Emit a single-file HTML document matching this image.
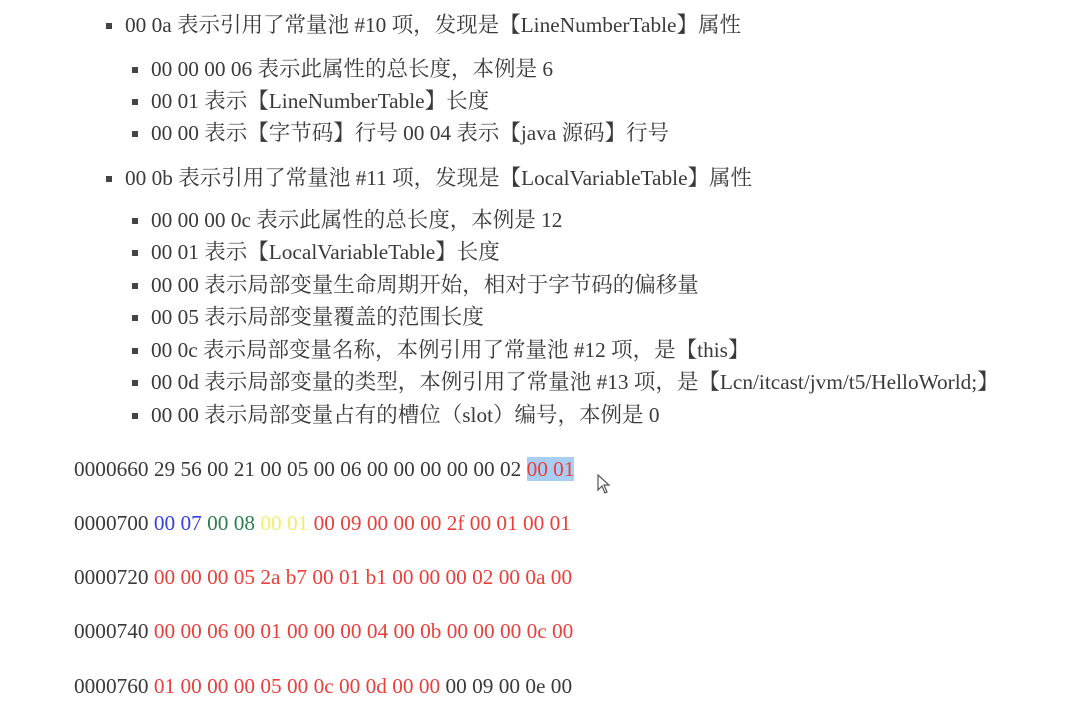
<!DOCTYPE html>
<html><head><meta charset="utf-8"><style>
body{margin:0;width:1083px;height:710px;background:#fff;overflow:hidden;font-family:"Liberation Serif","Noto Serif CJK SC","Noto Sans CJK SC",serif;font-size:21.3px;color:#3a3a3a;}
.l{position:absolute;white-space:nowrap;line-height:24px;}
.c{font-size:21.5px}
.b1::before,.b2::before{content:"";position:absolute;width:6px;height:6px;background:#444;top:10px;left:-19px}
.r{color:#e8403a}.bl{color:#3442e0}.g{color:#2e7d4f}.y{color:#f2ee6a}
.sel{background:#a9cdf3}
</style></head><body>
<div class="l b1" style="left:125px;top:13px">00 0a <span class="c">表示引用了常量池</span> #10 <span class="c">项，发现是【</span>LineNumberTable<span class="c">】属性</span></div>
<div class="l b2" style="left:151px;top:57px">00 00 00 06 <span class="c">表示此属性的总长度，本例是</span> 6</div>
<div class="l b2" style="left:151px;top:89px">00 01 <span class="c">表示【</span>LineNumberTable<span class="c">】长度</span></div>
<div class="l b2" style="left:151px;top:121px">00 00 <span class="c">表示【字节码】行号</span> 00 04 <span class="c">表示【</span>java <span class="c">源码】行号</span></div>
<div class="l b1" style="left:125px;top:166px">00 0b <span class="c">表示引用了常量池</span> #11 <span class="c">项，发现是【</span>LocalVariableTable<span class="c">】属性</span></div>
<div class="l b2" style="left:151px;top:208px">00 00 00 0c <span class="c">表示此属性的总长度，本例是</span> 12</div>
<div class="l b2" style="left:151px;top:240px">00 01 <span class="c">表示【</span>LocalVariableTable<span class="c">】长度</span></div>
<div class="l b2" style="left:151px;top:273px">00 00 <span class="c">表示局部变量生命周期开始，相对于字节码的偏移量</span></div>
<div class="l b2" style="left:151px;top:305px">00 05 <span class="c">表示局部变量覆盖的范围长度</span></div>
<div class="l b2" style="left:151px;top:338px">00 0c <span class="c">表示局部变量名称，本例引用了常量池</span> #12 <span class="c">项，是【</span>this<span class="c">】</span></div>
<div class="l b2" style="left:151px;top:370px">00 0d <span class="c">表示局部变量的类型，本例引用了常量池</span> #13 <span class="c">项，是【</span>Lcn/itcast/jvm/t5/HelloWorld;<span class="c">】</span></div>
<div class="l b2" style="left:151px;top:403px">00 00 <span class="c">表示局部变量占有的槽位（</span>slot<span class="c">）编号，本例是</span> 0</div>
<div class="l" style="left:74px;top:457px">0000660 29 56 00 21 00 05 00 06 00 00 00 00 00 02 <span class="r sel">00 01</span></div>
<svg style="position:absolute;left:597px;top:474px" width="16" height="22" viewBox="0 0 16 22"><path d="M1 1 L1 16 L5 12 L8 19 L10 18 L7 11 L12 11 Z" fill="#fff" stroke="#555" stroke-width="1.2"/></svg>
<div class="l" style="left:74px;top:511px">0000700 <span class="bl">00 07</span> <span class="g">00 08</span> <span class="y">00 01</span> <span class="r">00 09 00 00 00 2f 00 01 00 01</span></div>
<div class="l" style="left:74px;top:565px">0000720 <span class="r">00 00 00 05 2a b7 00 01 b1 00 00 00 02 00 0a 00</span></div>
<div class="l" style="left:74px;top:619px">0000740 <span class="r">00 00 06 00 01 00 00 00 04 00 0b 00 00 00 0c 00</span></div>
<div class="l" style="left:74px;top:674px">0000760 <span class="r">01 00 00 00 05 00 0c 00 0d 00 00</span> 00 09 00 0e 00</div>
</body></html>
